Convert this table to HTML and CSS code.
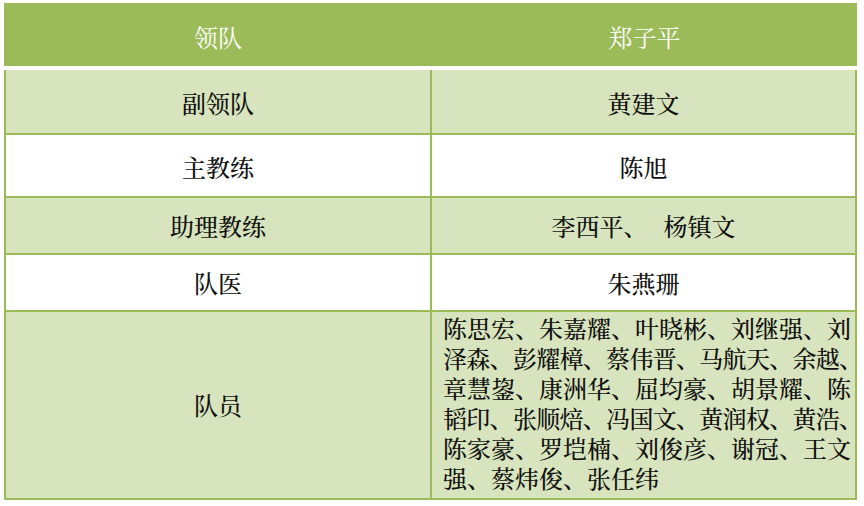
FILE: index.html
```html
<!DOCTYPE html>
<html lang="zh-CN">
<head>
<meta charset="utf-8">
<title>队伍名单</title>
<link rel="stylesheet" href="styles.css">
</head>
<body>
<div class="roster">
  <div class="row head">
    <div class="cell left">领队</div>
    <div class="cell right">郑子平</div>
  </div>
  <div class="row shade r1">
    <div class="cell left">副领队</div>
    <div class="cell right">黄建文</div>
  </div>
  <div class="row r2">
    <div class="cell left">主教练</div>
    <div class="cell right">陈旭</div>
  </div>
  <div class="row shade r3">
    <div class="cell left">助理教练</div>
    <div class="cell right">李西平、<span class="gap"></span>杨镇文</div>
  </div>
  <div class="row r4">
    <div class="cell left">队医</div>
    <div class="cell right">朱燕珊</div>
  </div>
  <div class="row shade r5">
    <div class="cell left">队员</div>
    <div class="cell right players"><p class="names">陈思宏、朱嘉耀、叶晓彬、刘继强、刘<br><span class="tight">泽森、彭耀樟、蔡伟晋、马航天、余越、</span><br>章慧鋆、康洲华、屈均豪、胡景耀、陈<br><span class="tight">韬印、张顺焙、冯国文、黄润权、黄浩、</span><br>陈家豪、罗垲楠、刘俊彦、谢冠、王文<br>强、蔡炜俊、张任纬</p></div>
  </div>
</div>
</body>
</html>
```
FILE: styles.css
```css
html, body {
  margin: 0;
  padding: 0;
  background: #ffffff;
}

body {
  font-family: "Noto Serif CJK SC", "Noto Sans CJK SC", "DejaVu Sans", sans-serif;
  color: #111111;
}

.roster {
  width: 853px;
  margin: 3px 0 0 4px;
}

.row {
  display: grid;
  grid-template-columns: 428px 425px;
  background: #ffffff;
  border-bottom: 2px solid #9bbb59;
}

.row.shade {
  background: #d7e4bd;
}

.row.head {
  background: #9bbb59;
  border-bottom: 4px solid #ffffff;
  height: 63px;
}

.cell {
  display: flex;
  align-items: center;
  justify-content: center;
  font-size: 24px;
  font-weight: 500;
  line-height: 30px;
}

.row .left {
  border-left: 2px solid #9bbb59;
  border-right: 2px solid #9bbb59;
}

.row .right {
  border-right: 2px solid #9bbb59;
}

.row.head .cell {
  border: none;
  color: #ffffff;
  font-weight: 400;
  padding-top: 4px;
}

.r1 { height: 63px; }
.r2 { height: 61px; }
.r3 { height: 55px; }
.r4 { height: 55px; }
.r5 { height: 186px; }

.r1 .cell, .r2 .cell { padding-top: 2px; }

.gap {
  display: inline-block;
  width: 16px;
}

.players {
  display: block;
  padding: 0 0 0 11px;
}

.names {
  margin: 0;
  padding-top: 1px;
  white-space: nowrap;
  line-height: 30px;
}

.tight {
  letter-spacing: -0.7px;
}
```
